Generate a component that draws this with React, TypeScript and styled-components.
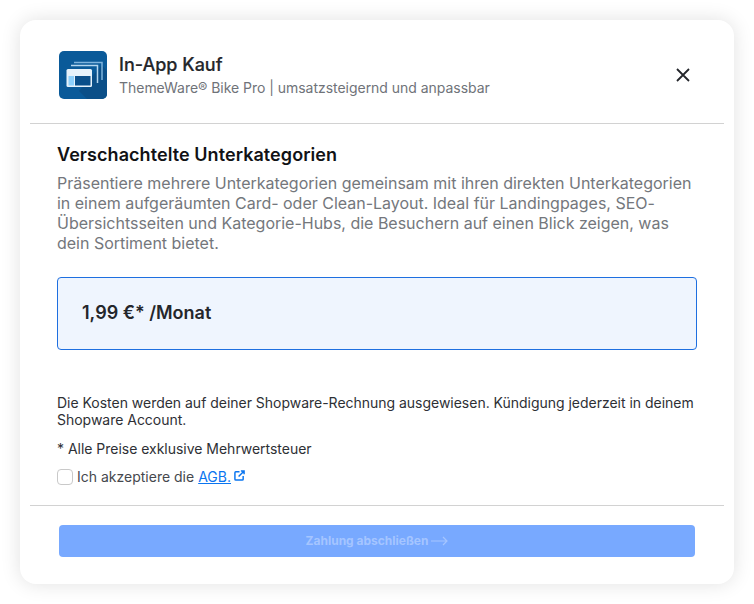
import React from "react";
import styled, { createGlobalStyle } from "styled-components";

const GlobalStyle = createGlobalStyle`
  html, body {
    margin: 0;
    padding: 0;
    background: #ffffff;
    font-family: Inter, "Liberation Sans", sans-serif;
  }
  * {
    box-sizing: border-box;
  }
`;

const Page = styled.div`
  width: 754px;
  height: 604px;
  padding: 20px;
  overflow: hidden;
`;

const Modal = styled.div`
  width: 714px;
  height: 564px;
  background: #ffffff;
  border-radius: 16px;
  padding: 0 10px;
  box-shadow: 0 0 20px rgba(0, 0, 0, 0.12);
  display: flex;
  flex-direction: column;
`;

const Header = styled.header`
  height: 104px;
  padding: 31px 33px 0 29px;
  display: flex;
  align-items: flex-start;
  border-bottom: 1px solid #d2d2d2;
`;

const AppIcon = styled.svg`
  width: 48px;
  height: 48px;
  flex: none;
  border-radius: 5px;
`;

const HeaderText = styled.div`
  margin-left: 12px;
  flex: 1;
  padding-top: 2px;
`;

const AppTitle = styled.div`
  font-size: 18px;
  line-height: 24px;
  font-weight: 500;
  -webkit-text-stroke: 0.2px #24262b;
  color: #24262b;
`;

const AppSubtitle = styled.div`
  margin-top: 1px;
  font-size: 14px;
  line-height: 20px;
  letter-spacing: -0.03px;
  color: #6f7379;
`;

const CloseButton = styled.button`
  width: 16px;
  height: 16px;
  margin-top: 16px;
  padding: 0;
  border: 0;
  background: none;
  display: flex;
  color: #24262b;
`;

const Body = styled.div`
  height: 382px;
  padding: 20px 27px 0;
  border-bottom: 1px solid #d2d2d2;
`;

const Heading = styled.h2`
  margin: 0 0 7px;
  font-size: 18px;
  line-height: 22px;
  font-weight: 600;
  letter-spacing: 0.07px;
  color: #111215;
`;

const Description = styled.p`
  margin: 0;
  font-size: 16px;
  line-height: 20px;
  letter-spacing: -0.01px;
  color: #74777c;
`;

const PriceBox = styled.div`
  margin-top: 24px;
  height: 73px;
  padding: 0 24px 2px;
  display: flex;
  align-items: center;
  background: #eff5fe;
  border: 1px solid #1e6fe0;
  border-radius: 4px;
  font-size: 18px;
  font-weight: 600;
  color: #24262b;
`;

const Note = styled.p<{ $top: number }>`
  margin: ${(p) => p.$top}px 0 0;
  font-size: 14px;
  line-height: 17px;
  letter-spacing: -0.02px;
  color: #2e3035;
`;

const TermsRow = styled.label`
  margin-top: 11px;
  display: flex;
  align-items: center;
  font-size: 14px;
  line-height: 18px;
  color: #45484d;
`;

const Checkbox = styled.span`
  width: 16px;
  height: 16px;
  margin-right: 4px;
  flex: none;
  border: 1px solid #c9c9c9;
  border-radius: 4px;
  background: #ffffff;
`;

const TermsLink = styled.a`
  margin-left: 4px;
  color: #0a75f0;
  text-decoration: underline;
`;

const ExternalIcon = styled.svg`
  width: 11px;
  height: 11px;
  margin: -3px 0 0 3px;
  color: #0a75f0;
`;

const Footer = styled.div`
  padding: 19px 29px 0;
`;

const PayButton = styled.button`
  width: 636px;
  height: 32px;
  padding: 0 0 2px;
  border: 0;
  border-radius: 4px;
  background: #78a9ff;
  color: #a5c5ff;
  font-family: inherit;
  font-size: 12px;
  font-weight: 700;
  display: flex;
  align-items: center;
  justify-content: center;
  gap: 3px;
`;

const ArrowIcon = styled.svg`
  width: 17px;
  height: 10px;
  margin-top: 1px;
`;

const App: React.FC = () => {
  return (
    <Page>
      <GlobalStyle />
      <Modal>
        <Header>
          <AppIcon viewBox="0 0 48 48">
            <rect width="48" height="48" fill="#0a5a99" />
            <path d="M20 40 L43 14 L48 20 V48 H28 Z" fill="#0b4f88" />
            <path d="M15 11.5 H43 V29" fill="none" stroke="#7fb4dd" strokeWidth="1.5" />
            <path d="M12 14.5 H38.5 V32" fill="none" stroke="#b5d6ef" strokeWidth="1.5" />
            <rect x="7.5" y="18" width="25.5" height="18" rx="1.5" fill="#e6f2fb" />
            <rect x="9.5" y="25" width="5.5" height="9.5" fill="#8ed0fb" />
            <rect x="16" y="25" width="15.5" height="9.5" fill="#0a4f8a" />
          </AppIcon>
          <HeaderText>
            <AppTitle>In-App Kauf</AppTitle>
            <AppSubtitle>ThemeWare® Bike Pro | umsatzsteigernd und anpassbar</AppSubtitle>
          </HeaderText>
          <CloseButton aria-label="Schließen">
            <svg width="16" height="16" viewBox="0 0 16 16" fill="none" stroke="currentColor" strokeWidth="1.8">
              <path d="M2 2 L14 14 M14 2 L2 14" />
            </svg>
          </CloseButton>
        </Header>
        <Body>
          <Heading>Verschachtelte Unterkategorien</Heading>
          <Description>
            Präsentiere mehrere Unterkategorien gemeinsam mit ihren direkten Unterkategorien in einem aufgeräumten
            Card- oder Clean-Layout. Ideal für Landingpages, SEO-Übersichtsseiten und Kategorie-Hubs, die Besuchern
            auf einen Blick zeigen, was dein Sortiment bietet.
          </Description>
          <PriceBox>1,99 €* /Monat</PriceBox>
          <Note $top={44}>
            Die Kosten werden auf deiner Shopware-Rechnung ausgewiesen. Kündigung jederzeit in deinem Shopware Account.
          </Note>
          <Note $top={12}>* Alle Preise exklusive Mehrwertsteuer</Note>
          <TermsRow>
            <Checkbox />
            Ich akzeptiere die <TermsLink href="#">AGB.</TermsLink>
            <ExternalIcon viewBox="0 0 12 12" fill="none" stroke="currentColor" strokeWidth="1.6">
              <path d="M6 2 H2 A1 1 0 0 0 1 3 V10 A1 1 0 0 0 2 11 H9 A1 1 0 0 0 10 10 V6.5" />
              <path d="M5 7 L11 1 M7.5 1 H11 V4.5" />
            </ExternalIcon>
          </TermsRow>
        </Body>
        <Footer>
          <PayButton>
            Zahlung abschließen
            <ArrowIcon viewBox="0 0 17 10" fill="none" stroke="currentColor" strokeWidth="1.2">
              <path d="M0 5 H16 M12 1 L16 5 L12 9" />
            </ArrowIcon>
          </PayButton>
        </Footer>
      </Modal>
    </Page>
  );
};

export default App;
